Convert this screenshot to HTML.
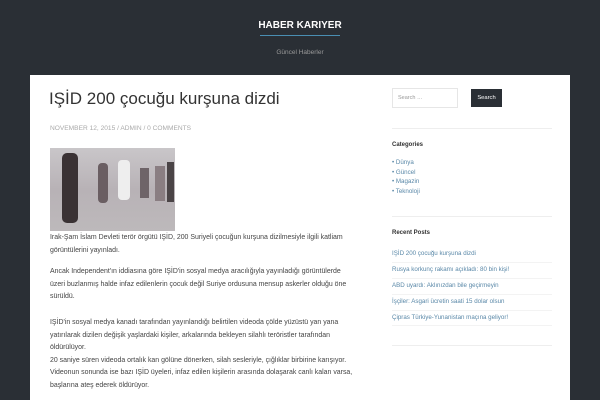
<!DOCTYPE html>
<html><head><meta charset="utf-8"><style>
*{margin:0;padding:0;box-sizing:border-box}
body{width:600px;height:400px;overflow:hidden;background:#2a2f35;font-family:"Liberation Sans",sans-serif;position:relative}
.a{position:absolute;white-space:nowrap}
.panel{position:absolute;left:30px;top:75px;width:540px;height:325px;background:#fff}
.p{font-size:6.95px;color:#444;line-height:12.5px}
.side{font-size:6.2px;color:#5a88a8}
.hr{position:absolute;left:392px;width:160px;height:1px;background:#eee}
</style></head><body>
<div class="a" style="left:0;width:600px;top:20px;text-align:center;color:#fff;font-weight:bold;font-size:10px">HABER KARIYER</div>
<div class="a" style="left:260px;width:80px;top:35px;height:1px;background:#4a8fb3"></div>
<div class="a" style="left:0;width:600px;top:49px;text-align:center;color:#999;font-size:6.5px">Güncel Haberler</div>
<div class="panel"></div>
<div class="a" style="left:49px;top:89px;font-size:17px;color:#333">IŞİD 200 çocuğu kurşuna dizdi</div>
<div class="a" style="left:50px;top:125px;font-size:6.6px;color:#aaa">NOVEMBER 12, 2015 / ADMIN / 0 COMMENTS</div>
<div class="a" style="left:50px;top:148px;width:125px;height:83px;background:linear-gradient(180deg,#c9c6c9 0%,#b8b2b6 50%,#bdb9bb 100%)">
<div style="position:absolute;left:12px;top:5px;width:16px;height:70px;background:#3a3234;border-radius:5px"></div>
<div style="position:absolute;left:48px;top:15px;width:10px;height:40px;background:#6a5e62;border-radius:4px"></div>
<div style="position:absolute;left:68px;top:12px;width:12px;height:40px;background:#eee;border-radius:4px"></div>
<div style="position:absolute;left:90px;top:20px;width:9px;height:30px;background:#6e6468"></div>
<div style="position:absolute;left:105px;top:18px;width:10px;height:35px;background:#8a7e82"></div>
<div style="position:absolute;left:117px;top:14px;width:7px;height:40px;background:#4a4446"></div>
</div>
<div class="a p" style="left:50px;top:232px">Irak-Şam İslam Devleti terör örgütü IŞİD, 200 Suriyeli çocuğun kurşuna dizilmesiyle ilgili katliam<br>görüntülerini yayınladı.</div>
<div class="a p" style="left:50px;top:266px">Ancak Independent'ın iddiasına göre IŞİD'in sosyal medya aracılığıyla yayınladığı görüntülerde<br>üzeri buzlanmış halde infaz edilenlerin çocuk değil Suriye ordusuna mensup askerler olduğu öne<br>sürüldü.</div>
<div class="a p" style="left:50px;top:317px">IŞİD'in sosyal medya kanadı tarafından yayınlandığı belirtilen videoda çölde yüzüstü yan yana<br>yatırılarak dizilen değişik yaşlardaki kişiler, arkalarında bekleyen silahlı teröristler tarafından<br>öldürülüyor.<br>20 saniye süren videoda ortalık kan gölüne dönerken, silah sesleriyle, çığlıklar birbirine karışıyor.<br>Videonun sonunda ise bazı IŞİD üyeleri, infaz edilen kişilerin arasında dolaşarak canlı kalan varsa,<br>başlarına ateş ederek öldürüyor.</div>
<div class="a" style="left:392px;top:88px;width:66px;height:20px;border:1px solid #e6e6e6;font-size:5.5px;color:#999;padding:6px 5px">Search …</div>
<div class="a" style="left:471px;top:89px;width:31px;height:18px;background:#2a2f35;color:#fff;font-size:5.8px;text-align:center;line-height:18px">Search</div>
<div class="hr" style="top:128px"></div>
<div class="a" style="left:392px;top:142px;font-size:6px;font-weight:bold;color:#333">Categories</div>
<div class="a side" style="left:392px;top:158px;line-height:9.5px">• <span>Dünya</span><br>• Güncel<br>• Magazin<br>• Teknoloji</div>
<div class="hr" style="top:216px"></div>
<div class="a" style="left:392px;top:230px;font-size:6px;font-weight:bold;color:#333">Recent Posts</div>
<div class="a side" style="left:392px;top:250px">IŞİD 200 çocuğu kurşuna dizdi</div>
<div class="hr" style="top:262px;background:#f3f3f3"></div>
<div class="a side" style="left:392px;top:266px">Rusya korkunç rakamı açıkladı: 80 bin kişi!</div>
<div class="hr" style="top:278px;background:#f3f3f3"></div>
<div class="a side" style="left:392px;top:282px">ABD uyardı: Aklınızdan bile geçirmeyin</div>
<div class="hr" style="top:294px;background:#f3f3f3"></div>
<div class="a side" style="left:392px;top:298px">İşçiler: Asgari ücretin saati 15 dolar olsun</div>
<div class="hr" style="top:310px;background:#f3f3f3"></div>
<div class="a side" style="left:392px;top:314px">Çipras Türkiye-Yunanistan maçına geliyor!</div>
<div class="hr" style="top:325px;background:#f3f3f3"></div>
<div class="hr" style="top:345px"></div>
</body></html>
